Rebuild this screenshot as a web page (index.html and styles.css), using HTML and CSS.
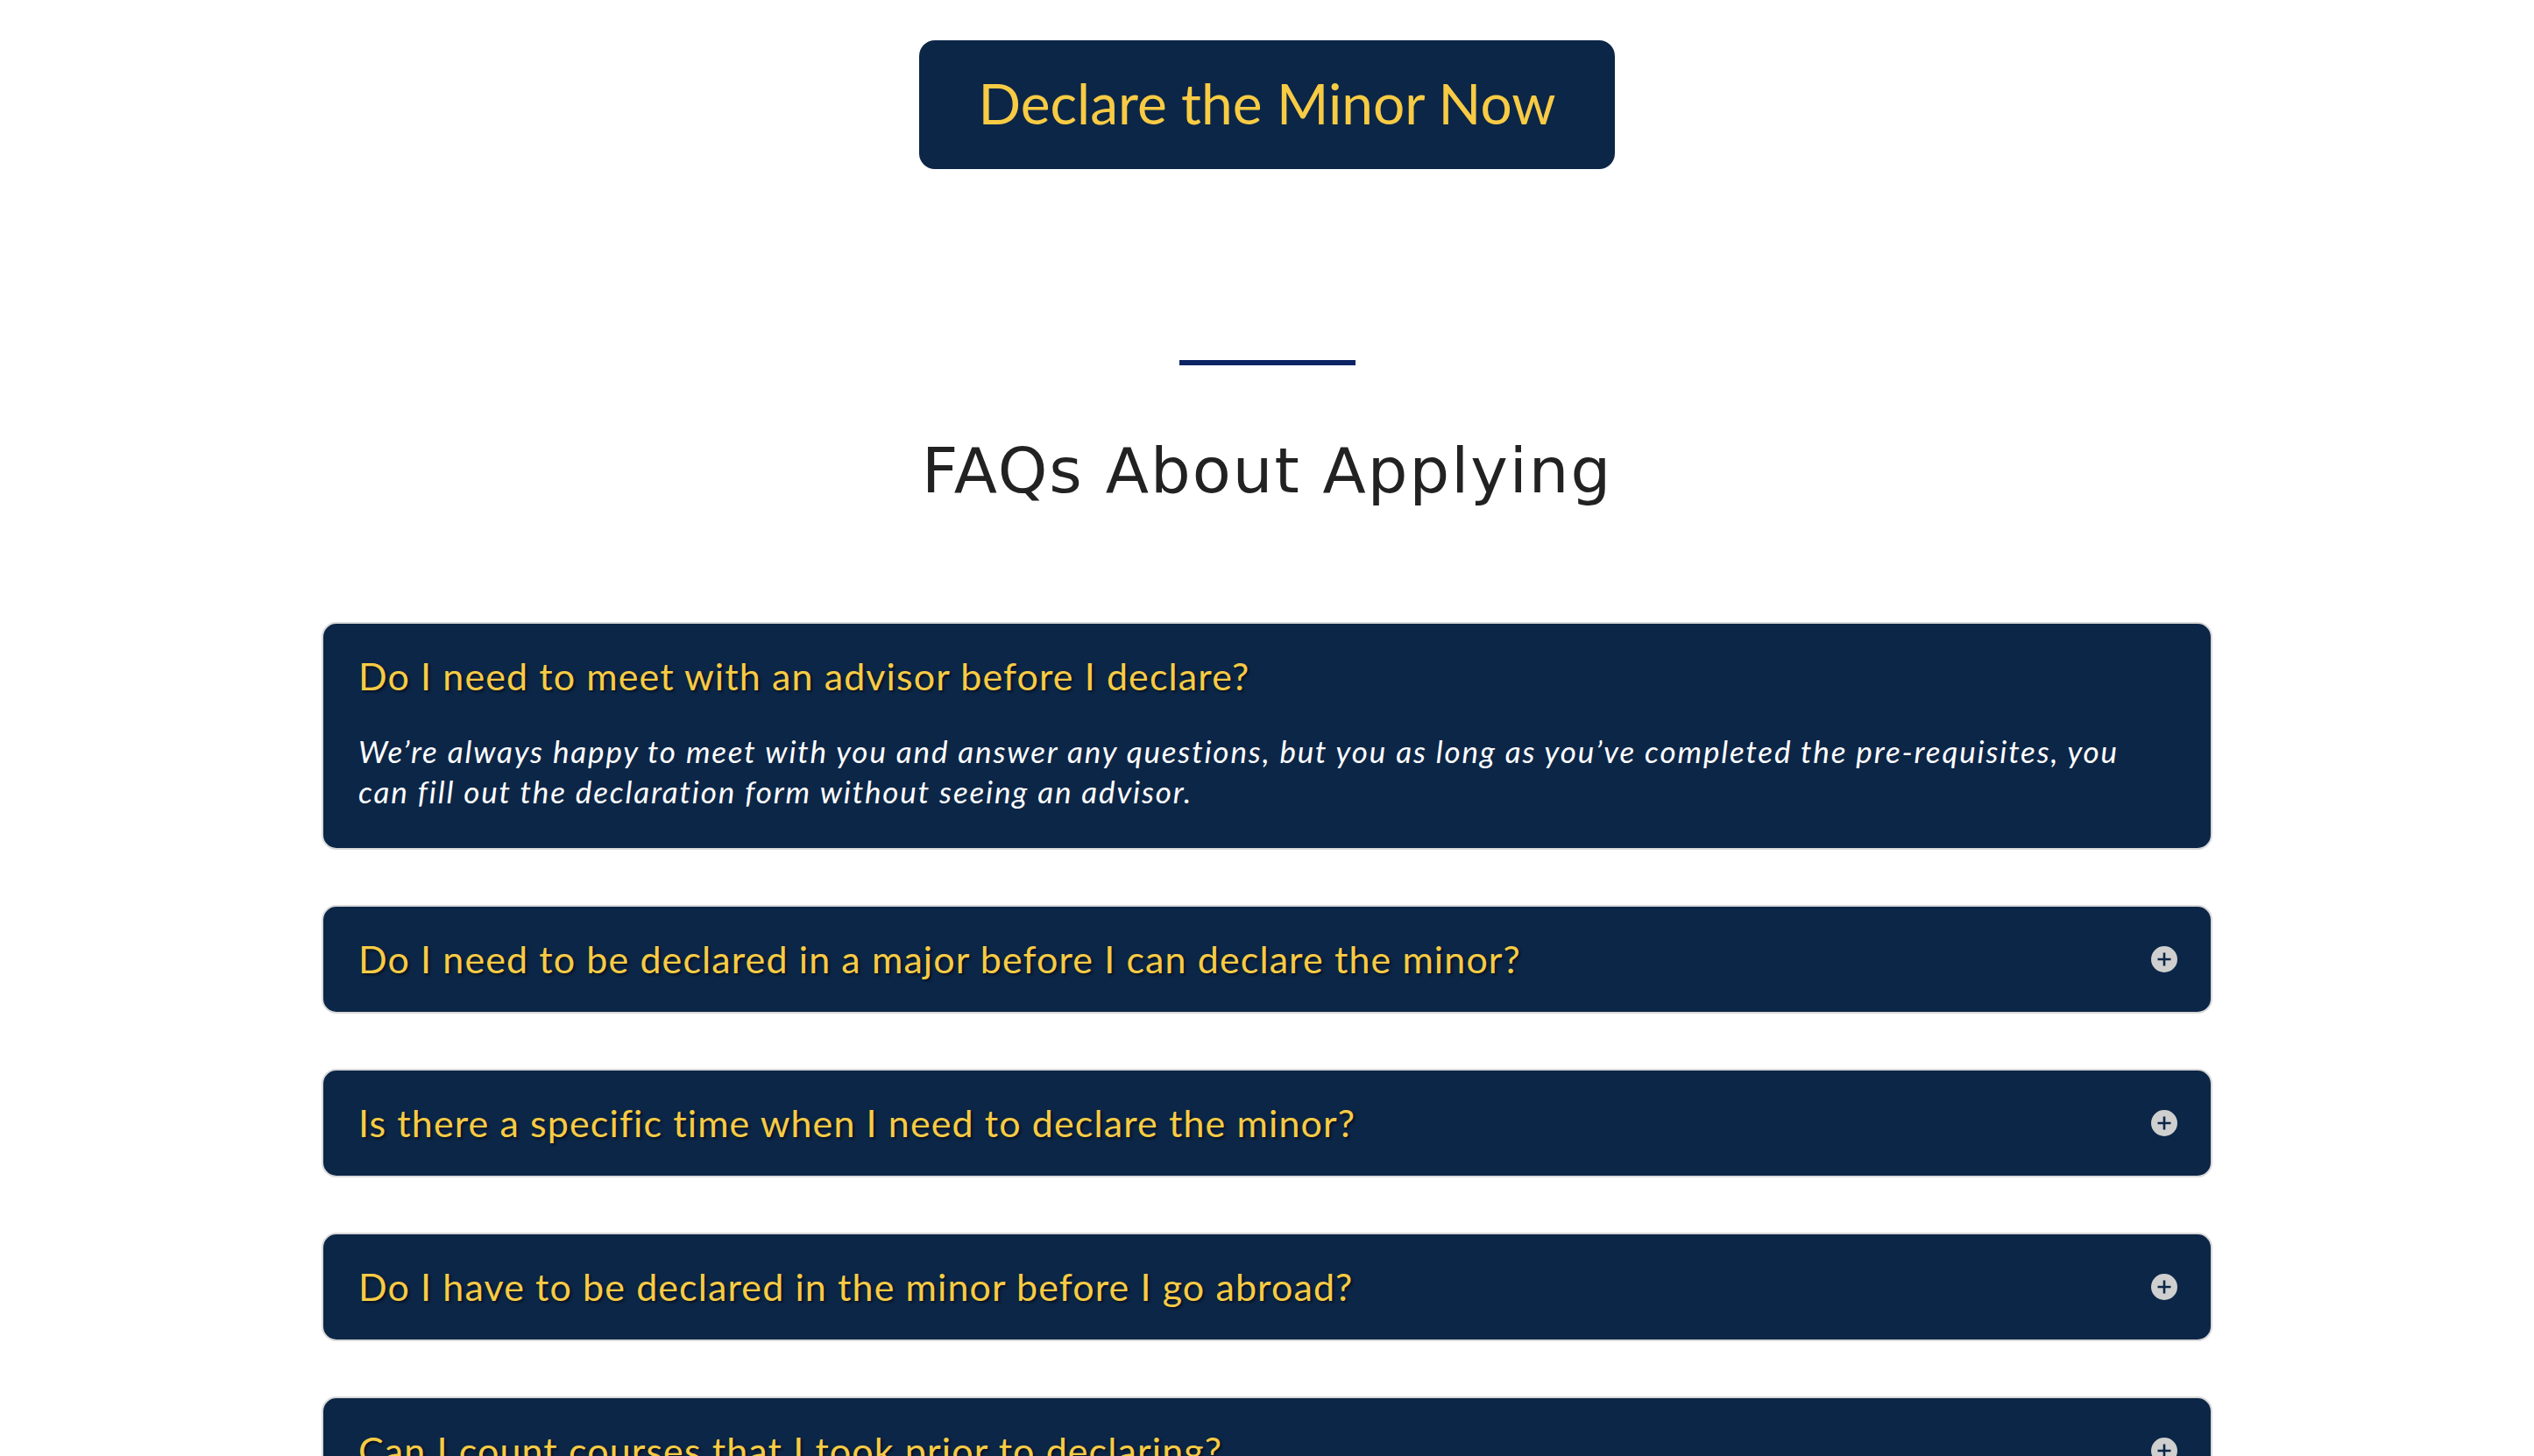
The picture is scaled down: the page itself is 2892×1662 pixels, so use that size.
FILE: index.html
```html
<!DOCTYPE html>
<html lang="en">
<head>
<meta charset="utf-8">
<title>FAQs About Applying</title>
<link rel="stylesheet" href="styles.css">
</head>
<body>
<main class="page">
  <div class="cta-wrap">
    <a class="cta" href="#">Declare the Minor Now</a>
  </div>

  <section class="faq">
    <div class="divider"></div>
    <h2 class="faq-title">FAQs About Applying</h2>

    <div class="faq-list">
      <div class="faq-item open">
        <div class="faq-q">Do I need to meet with an advisor before I declare?</div>
        <div class="faq-a">We’re always happy to meet with you and answer any questions, but you as long as you’ve completed the pre-requisites, you can fill out the declaration form without seeing an advisor.</div>
      </div>

      <div class="faq-item">
        <div class="faq-q">Do I need to be declared in a major before I can declare the minor?
          <svg class="plus" viewBox="0 0 30 30" aria-hidden="true"><circle cx="15" cy="15" r="15" fill="#cfcfcf"/><path d="M15 7.5v15M7.5 15h15" stroke="#0c2647" stroke-width="2.6"/></svg>
        </div>
      </div>

      <div class="faq-item">
        <div class="faq-q">Is there a specific time when I need to declare the minor?
          <svg class="plus" viewBox="0 0 30 30" aria-hidden="true"><circle cx="15" cy="15" r="15" fill="#cfcfcf"/><path d="M15 7.5v15M7.5 15h15" stroke="#0c2647" stroke-width="2.6"/></svg>
        </div>
      </div>

      <div class="faq-item">
        <div class="faq-q">Do I have to be declared in the minor before I go abroad?
          <svg class="plus" viewBox="0 0 30 30" aria-hidden="true"><circle cx="15" cy="15" r="15" fill="#cfcfcf"/><path d="M15 7.5v15M7.5 15h15" stroke="#0c2647" stroke-width="2.6"/></svg>
        </div>
      </div>

      <div class="faq-item">
        <div class="faq-q">Can I count courses that I took prior to declaring?
          <svg class="plus" viewBox="0 0 30 30" aria-hidden="true"><circle cx="15" cy="15" r="15" fill="#cfcfcf"/><path d="M15 7.5v15M7.5 15h15" stroke="#0c2647" stroke-width="2.6"/></svg>
        </div>
      </div>
    </div>
  </section>
</main>
</body>
</html>
```

FILE: styles.css
```css
html, body {
  margin: 0;
  padding: 0;
  background: #ffffff;
}

body {
  font-family: "Lato", "Noto Sans", sans-serif;
  color: #222222;
}

.page {
  display: flex;
  flex-direction: column;
  align-items: center;
  padding-top: 46px;
}

.cta-wrap {
  display: flex;
  justify-content: center;
}

.cta {
  display: block;
  background: #0c2647;
  color: #f8cb44;
  text-decoration: none;
  font-family: "Lato", sans-serif;
  font-size: 64px;
  line-height: 97px;
  padding: 23px 67px 27px;
  border-radius: 18px;
}

.faq {
  width: 2158px;
  display: flex;
  flex-direction: column;
  align-items: center;
}

.divider {
  width: 201px;
  height: 6px;
  background: #0b2463;
  margin-top: 218px;
}

.faq-title {
  font-family: "DejaVu Sans", "Inter", sans-serif;
  font-weight: 400;
  font-size: 72px;
  line-height: 86px;
  letter-spacing: 2px;
  margin: 77px 0 0;
  color: #222222;
}

.faq-list {
  width: 100%;
  margin-top: 130px;
  display: flex;
  flex-direction: column;
  gap: 63px;
  padding-bottom: 200px;
}

.faq-item {
  background: #0c2647;
  border: 2px solid #d9d9d9;
  border-radius: 17px;
}

.faq-q {
  display: flex;
  justify-content: space-between;
  align-items: center;
  padding: 29px 38px 29px 40px;
  font-size: 43px;
  line-height: 62px;
  letter-spacing: 1.1px;
  color: #f8cb44;
  text-shadow: 2px 2px 3px rgba(0, 0, 0, 0.55);
}

.plus {
  width: 30px;
  height: 30px;
  flex: none;
}

.faq-a {
  padding: 2px 70px 42px 40px;
  font-size: 35px;
  line-height: 46px;
  letter-spacing: 1.85px;
  font-style: italic;
  color: #ffffff;
}
```
